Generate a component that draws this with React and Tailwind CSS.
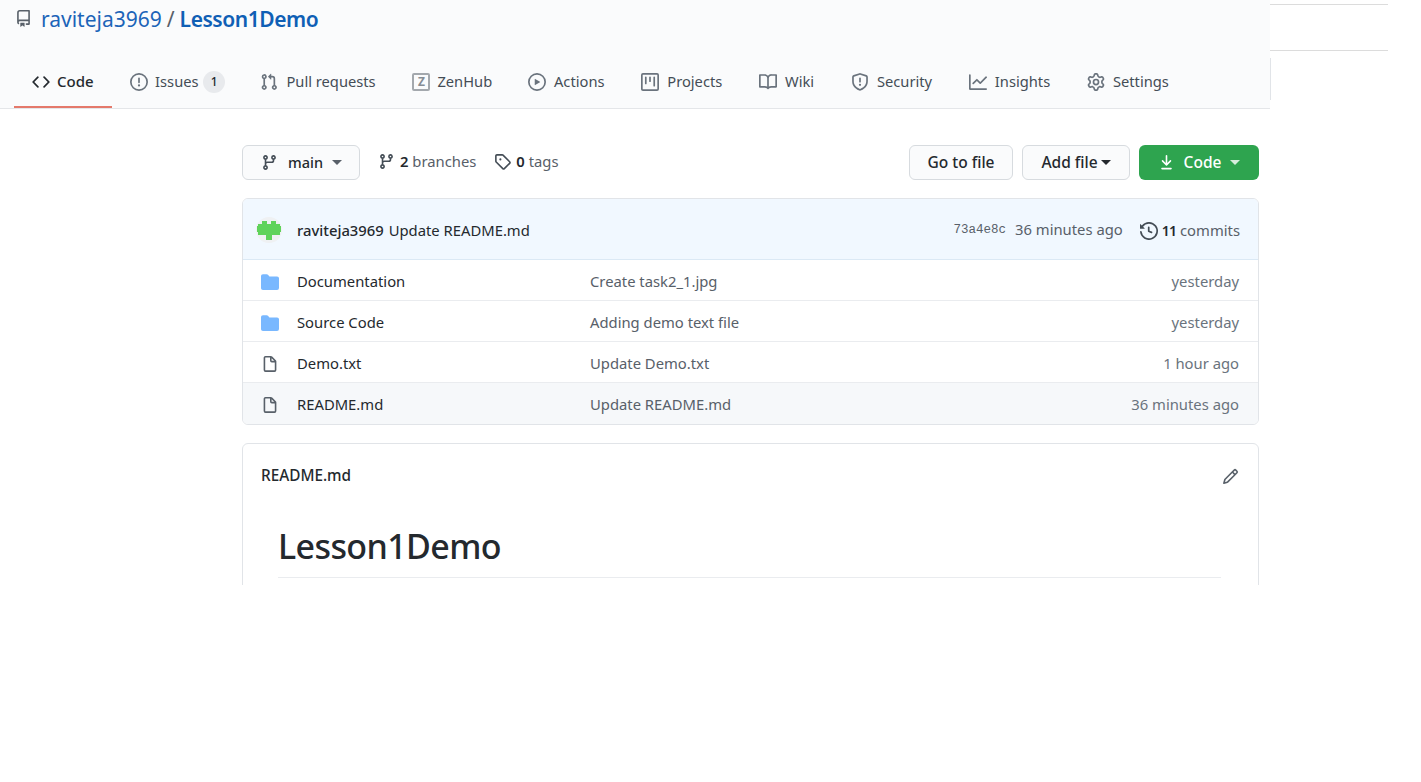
import React from "react";

const P = {
  repo: "M2 2.5A2.5 2.5 0 014.5 0h8.75a.75.75 0 01.75.75v12.5a.75.75 0 01-.75.75h-2.5a.75.75 0 110-1.5h1.75v-2h-8a1 1 0 00-.714 1.7.75.75 0 01-1.072 1.05A2.495 2.495 0 012 11.5v-9zm10.5-1V9h-8c-.356 0-.694.074-1 .208V2.5a1 1 0 011-1h8zM5 12.25v3.25a.25.25 0 00.4.2l1.45-1.087a.25.25 0 01.3 0L8.6 15.7a.25.25 0 00.4-.2v-3.25a.25.25 0 00-.25-.25h-3.5a.25.25 0 00-.25.25z",
  code: "M4.72 3.22a.75.75 0 011.06 1.06L2.06 8l3.72 3.72a.75.75 0 11-1.06 1.06L.47 8.53a.75.75 0 010-1.06l4.25-4.25zm6.56 0a.75.75 0 10-1.06 1.06L13.94 8l-3.72 3.72a.75.75 0 101.06 1.06l4.25-4.25a.75.75 0 000-1.06l-4.25-4.25z",
  issue: "M8 1.5a6.5 6.5 0 100 13 6.5 6.5 0 000-13zM0 8a8 8 0 1116 0A8 8 0 010 8zm9 3a1 1 0 11-2 0 1 1 0 012 0zm-.25-6.25a.75.75 0 00-1.5 0v3.5a.75.75 0 001.5 0v-3.5z",
  pr: "M7.177 3.073L9.573.677A.25.25 0 0110 .854v4.792a.25.25 0 01-.427.177L7.177 3.427a.25.25 0 010-.354zM3.75 2.5a.75.75 0 100 1.5.75.75 0 000-1.5zm-2.25.75a2.25 2.25 0 113 2.122v5.256a2.251 2.251 0 11-1.5 0V5.372A2.25 2.25 0 011.5 3.25zM11 2.5h-1V4h1a1 1 0 011 1v5.628a2.251 2.251 0 101.5 0V5A2.5 2.5 0 0011 2.5zm1 10.25a.75.75 0 111.5 0 .75.75 0 01-1.5 0zM3.75 12a.75.75 0 100 1.5.75.75 0 000-1.5z",
  play: "M1.5 8a6.5 6.5 0 1113 0 6.5 6.5 0 01-13 0zM8 0a8 8 0 100 16A8 8 0 008 0zM6.379 5.227A.25.25 0 006 5.442v5.117a.25.25 0 00.379.214l4.264-2.559a.25.25 0 000-.428L6.379 5.227z",
  project: "M1.75 0A1.75 1.75 0 000 1.75v12.5C0 15.216.784 16 1.75 16h12.5A1.75 1.75 0 0016 14.25V1.75A1.75 1.75 0 0014.25 0H1.75zM1.5 1.75a.25.25 0 01.25-.25h12.5a.25.25 0 01.25.25v12.5a.25.25 0 01-.25.25H1.75a.25.25 0 01-.25-.25V1.75zM11.75 3a.75.75 0 00-.75.75v7.5a.75.75 0 001.5 0v-7.5a.75.75 0 00-.75-.75zm-8.25.75a.75.75 0 011.5 0v5.5a.75.75 0 01-1.5 0v-5.5zM8 3a.75.75 0 00-.75.75v3.5a.75.75 0 001.5 0v-3.5A.75.75 0 008 3z",
  book: "M0 1.75A.75.75 0 01.75 1h4.253c1.227 0 2.317.59 3 1.501A3.744 3.744 0 0111.006 1h4.245a.75.75 0 01.75.75v10.5a.75.75 0 01-.75.75h-4.507a2.25 2.25 0 00-1.591.659l-.622.621a.75.75 0 01-1.06 0l-.622-.621A2.25 2.25 0 005.258 13H.75a.75.75 0 01-.75-.75V1.75zm8.755 3a2.25 2.25 0 012.25-2.25H14.5v9h-3.757c-.71 0-1.4.201-1.992.572l.004-7.322zm-1.504 7.324l.004-5.073-.002-2.253A2.25 2.25 0 005.003 2.5H1.5v9h3.757a3.75 3.75 0 011.994.574z",
  shield: "M7.467.133a1.75 1.75 0 011.066 0l5.25 1.68A1.75 1.75 0 0115 3.48V7c0 1.566-.32 3.182-1.303 4.682-.983 1.498-2.585 2.813-5.032 3.855a1.7 1.7 0 01-1.33 0c-2.447-1.042-4.049-2.357-5.032-3.855C1.32 10.182 1 8.566 1 7V3.48a1.75 1.75 0 011.217-1.667l5.25-1.68zm.61 1.429a.25.25 0 00-.153 0l-5.25 1.68a.25.25 0 00-.174.238V7c0 1.358.275 2.666 1.057 3.86.784 1.194 2.121 2.34 4.366 3.297a.2.2 0 00.154 0c2.245-.956 3.582-2.104 4.366-3.298C13.225 9.666 13.5 8.36 13.5 7V3.48a.25.25 0 00-.174-.237l-5.25-1.68zM9 10.5a1 1 0 11-2 0 1 1 0 012 0zm-.25-5.75a.75.75 0 10-1.5 0v3a.75.75 0 001.5 0v-3z",
  graph: "M1.5 1.75a.75.75 0 00-1.5 0v12.5c0 .414.336.75.75.75h14.5a.75.75 0 000-1.5H1.5V1.75zm14.28 2.53a.75.75 0 00-1.06-1.06L10 7.94 7.53 5.47a.75.75 0 00-1.06 0L3.22 8.72a.75.75 0 001.06 1.06L7 7.06l2.47 2.47a.75.75 0 001.06 0l5.25-5.25z",
  gear: "M7.429 1.525a6.593 6.593 0 011.142 0c.036.003.108.036.137.146l.289 1.105c.147.56.55.967.997 1.189.174.086.341.183.501.29.417.278.97.423 1.53.27l1.102-.303c.11-.03.175.016.195.046.219.31.41.641.573.989.014.031.022.11-.059.19l-.815.806c-.411.406-.562.957-.53 1.456a4.588 4.588 0 010 .582c-.032.499.119 1.05.53 1.456l.815.806c.08.08.073.159.059.19a6.494 6.494 0 01-.573.99c-.02.029-.086.074-.195.045l-1.103-.303c-.559-.153-1.112-.008-1.529.27-.16.107-.327.204-.5.29-.449.222-.851.628-.998 1.189l-.289 1.105c-.029.11-.101.143-.137.146a6.613 6.613 0 01-1.142 0c-.036-.003-.108-.037-.137-.146l-.289-1.105c-.147-.56-.55-.967-.997-1.189a4.502 4.502 0 01-.501-.29c-.417-.278-.97-.423-1.53-.27l-1.102.303c-.11.03-.175-.016-.195-.046a6.492 6.492 0 01-.573-.989c-.014-.031-.022-.11.059-.19l.815-.806c.411-.406.562-.957.53-1.456a4.587 4.587 0 010-.582c.032-.499-.119-1.05-.53-1.456l-.815-.806c-.08-.08-.073-.159-.059-.19a6.44 6.44 0 01.573-.99c.02-.029.086-.075.195-.045l1.103.303c.559.153 1.112.008 1.529-.27.16-.107.327-.204.5-.29.449-.222.851-.628.998-1.189l.289-1.105c.029-.11.101-.143.137-.146zM8 0c-.236 0-.47.01-.701.03-.743.065-1.29.615-1.458 1.261l-.29 1.106c-.017.066-.078.158-.211.224a5.994 5.994 0 00-.668.386c-.123.082-.233.09-.3.071L3.27 2.776c-.644-.177-1.392.02-1.82.63a7.977 7.977 0 00-.704 1.217c-.315.675-.111 1.422.363 1.891l.815.806c.05.048.098.147.088.294a6.084 6.084 0 000 .772c.01.147-.038.246-.088.294l-.815.806c-.474.469-.678 1.216-.363 1.891.2.428.436.835.704 1.218.428.609 1.176.806 1.82.63l1.103-.303c.066-.019.176-.011.299.071.213.143.436.272.668.386.133.066.194.158.212.224l.289 1.106c.169.646.715 1.196 1.458 1.26a8.094 8.094 0 001.402 0c.743-.064 1.29-.614 1.458-1.26l.29-1.106c.017-.066.078-.158.211-.224a5.98 5.98 0 00.668-.386c.123-.082.233-.09.3-.071l1.102.302c.644.177 1.392-.02 1.82-.63.268-.382.505-.789.704-1.217.315-.675.111-1.422-.364-1.891l-.814-.806c-.05-.048-.098-.147-.088-.294a6.1 6.1 0 000-.772c-.01-.147.039-.246.088-.294l.814-.806c.475-.469.679-1.216.364-1.891a7.992 7.992 0 00-.704-1.218c-.428-.609-1.176-.806-1.82-.63l-1.103.303c-.066.019-.176.011-.299-.071a5.991 5.991 0 00-.668-.386c-.133-.066-.194-.158-.212-.224L10.16 1.29C9.99.645 9.444.095 8.701.031A8.094 8.094 0 008 0zm1.5 8a1.5 1.5 0 11-3 0 1.5 1.5 0 013 0zM11 8a3 3 0 11-6 0 3 3 0 016 0z",
  branch: "M11.75 2.5a.75.75 0 100 1.5.75.75 0 000-1.5zm-2.25.75a2.25 2.25 0 113 2.122V6A2.5 2.5 0 0110 8.5H6a1 1 0 00-1 1v1.128a2.251 2.251 0 11-1.5 0V5.372a2.25 2.25 0 111.5 0v1.836A2.492 2.492 0 016 7h4a1 1 0 001-1v-.628A2.25 2.25 0 019.5 3.25zM4.25 12a.75.75 0 100 1.5.75.75 0 000-1.5zM3.5 3.25a.75.75 0 111.5 0 .75.75 0 01-1.5 0z",
  tag: "M2.5 7.775V2.75a.25.25 0 01.25-.25h5.025a.25.25 0 01.177.073l6.25 6.25a.25.25 0 010 .354l-5.025 5.025a.25.25 0 01-.354 0l-6.25-6.25a.25.25 0 01-.073-.177zm-1.5 0V2.75C1 1.784 1.784 1 2.75 1h5.025c.464 0 .91.184 1.238.513l6.25 6.25a1.75 1.75 0 010 2.474l-5.026 5.026a1.75 1.75 0 01-2.474 0l-6.25-6.25A1.75 1.75 0 011 7.775zM6 5a1 1 0 100 2 1 1 0 000-2z",
  download: "M7.47 10.78a.75.75 0 001.06 0l3.75-3.75a.75.75 0 00-1.06-1.06L8.75 8.44V1.75a.75.75 0 00-1.5 0v6.69L4.78 5.97a.75.75 0 00-1.06 1.06l3.75 3.75zM3.75 13a.75.75 0 000 1.5h8.5a.75.75 0 000-1.5h-8.5z",
  history: "M1.643 3.143L.427 1.927A.25.25 0 000 2.104V5.75c0 .138.112.25.25.25h3.646a.25.25 0 00.177-.427L2.715 4.215a6.5 6.5 0 11-1.18 4.458.75.75 0 10-1.493.154 8.001 8.001 0 101.6-5.684zM7.75 4a.75.75 0 01.75.75v2.992l2.028.812a.75.75 0 01-.557 1.392l-2.5-1A.75.75 0 017 8.25v-3.5A.75.75 0 017.75 4z",
  folder: "M1.75 1A1.75 1.75 0 000 2.75v10.5C0 14.216.784 15 1.75 15h12.5A1.75 1.75 0 0016 13.25v-8.5A1.75 1.75 0 0014.25 3H7.5a.25.25 0 01-.2-.1l-.9-1.2C6.07 1.26 5.55 1 5 1H1.75z",
  file: "M3.75 1.5a.25.25 0 00-.25.25v11.5c0 .138.112.25.25.25h8.5a.25.25 0 00.25-.25V6H9.75A1.75 1.75 0 018 4.25V1.5H3.75zm5.75.56v2.19c0 .138.112.25.25.25h2.19L9.5 2.06zM2 1.75C2 .784 2.784 0 3.75 0h5.086c.464 0 .909.184 1.237.513l3.414 3.414c.329.328.513.773.513 1.237v8.086A1.75 1.75 0 0112.25 15h-8.5A1.75 1.75 0 012 13.25V1.75z",
  pencil: "M11.013 1.427a1.75 1.75 0 012.474 0l1.086 1.086a1.75 1.75 0 010 2.474l-8.61 8.61c-.21.21-.47.364-.756.445l-3.251.93a.75.75 0 01-.927-.928l.929-3.25a1.75 1.75 0 01.445-.758l8.61-8.61zm1.414 1.06a.25.25 0 00-.354 0L10.811 3.75l1.439 1.44 1.263-1.263a.25.25 0 000-.354l-1.086-1.086zM11.189 6.25L9.75 4.81l-6.286 6.287a.25.25 0 00-.064.108l-.558 1.953 1.953-.558a.249.249 0 00.108-.064l6.286-6.286z",
};

function Icon({ name, size = 17, className = "" }) {
  return (
    <svg viewBox="0 0 16 16" width={size} height={size} fill="currentColor" className={"shrink-0 " + className}>
      <path fillRule="evenodd" clipRule="evenodd" d={P[name]} />
    </svg>
  );
}

function Caret({ className = "" }) {
  return <span className={"inline-block w-0 h-0 border-x-[5px] border-x-transparent border-t-[5px] " + className} />;
}

function Tab({ icon, label, active, badge }) {
  const look = active
    ? "gap-[7px] px-[18px] text-[15px] border-[#e4796b] text-[#24292e] font-medium"
    : badge
      ? "gap-[7.5px] pl-[18px] pr-[17px] text-[14.7px] border-transparent text-[#444d56]"
      : icon === "zenhub"
        ? "gap-[7px] pl-[18.4px] pr-[17.4px] text-[14.7px] border-transparent text-[#444d56]"
        : "gap-[8px] px-[18.4px] text-[14.7px] border-transparent text-[#444d56]";
  return (
    <div className={"h-full flex items-center border-b-2 " + look}>
      {icon === "zenhub" ? (
        <span className="w-[18px] h-[18px] border-2 border-[#a3a8ad] rounded-[2px] flex items-center justify-center text-[12px] font-bold leading-none text-[#868d94]">Z</span>
      ) : (
        <Icon name={icon} size={18} className={active ? "text-[#24292e]" : "text-[#6a737d]"} />
      )}
      <span>{label}</span>
      {badge && <span className="ml-[-3px] w-[22px] h-[22px] rounded-full bg-[#e8eaed] flex items-center justify-center text-[12px] font-medium text-[#24292e]">{badge}</span>}
    </div>
  );
}

function Row({ icon, name, msg, time, last }) {
  const folder = icon === "folder";
  return (
    <div className={"h-[41px] pt-[2px] flex items-center pl-[18px] pr-[19px] text-[14.8px] " + (last ? "bg-[#f6f8fa]" : "border-b border-[#eaecef]")}>
      <Icon name={icon} size={folder ? 18 : 17} className={"w-[18px] mt-[2px] " + (folder ? "text-[#79b8ff]" : "text-[#586069]")} />
      <span className="ml-[18px] w-[293px] text-[#24292e]">{name}</span>
      <span className="flex-1 text-[#586069]">{msg}</span>
      <span className="text-[#6a737d]">{time}</span>
    </div>
  );
}

function Avatar() {
  return (
    <span className="w-[26px] h-[26px] rounded-full bg-[#eff1f3] flex items-center justify-center shrink-0">
      <svg width="24" height="19" viewBox="0 0 24 19" fill="#5fd35b">
        <path d="M5 0h5v3h4V0h5v3h4v2h1v6h-1v3h-8v5H9v-5H1v-3H0V5h1V3h4z" />
      </svg>
    </span>
  );
}

export default function App() {
  return (
    <div className="min-h-[782px] bg-white overflow-hidden" style={{ fontFamily: '"Noto Sans", "Open Sans", Arial, sans-serif' }}>
      <div className="flex items-start">
        <header className="w-[1270px] h-[109px] bg-[#fafbfc] border-b border-[#e4e6e9] flex flex-col">
          <div className="h-[57px] flex items-start pl-[15px] pt-[4px] text-[21px] leading-[30px]">
            <Icon name="repo" size={17} className="text-[#586069] mt-[6px] mr-[9px]" />
            <span className="text-[#1c64b8]">raviteja3969</span>
            <span className="text-[#586069] mx-[5px]">/</span>
            <span className="text-[#0f5fb5] font-semibold tracking-[-0.45px]">Lesson1Demo</span>
          </div>
          <nav className="h-[51px] flex pl-[14px]">
            <Tab icon="code" label="Code" active />
            <Tab icon="issue" label="Issues" badge="1" />
            <Tab icon="pr" label="Pull requests" />
            <Tab icon="zenhub" label="ZenHub" />
            <Tab icon="play" label="Actions" />
            <Tab icon="project" label="Projects" />
            <Tab icon="book" label="Wiki" />
            <Tab icon="shield" label="Security" />
            <Tab icon="graph" label="Insights" />
            <Tab icon="gear" label="Settings" />
          </nav>
        </header>
        <div className="flex flex-col">
          <div className="w-[118px] h-[47px] mt-[4px] border-y border-[#dcdcdc]" />
          <div className="h-[42px] mt-[7px] border-l border-[#e1e4e8]" />
        </div>
      </div>

      <main className="ml-[242px] w-[1017px] h-[476px] overflow-hidden">
        <div className="mt-[36px] h-[35px] flex items-center text-[14.8px]">
          <div className="w-[118px] h-[35px] rounded-[6px] border border-[#d7dbdf] bg-[#fafbfc] flex items-center justify-center gap-[9px] pl-[1px] font-medium text-[14.5px] text-[#24292e]">
            <Icon name="branch" className="text-[#444d56] mr-[1px]" />
            <span>main</span>
            <Caret className="border-t-[#586069]" />
          </div>
          <div className="ml-[18px] -mt-[2px] flex items-center gap-[5px] text-[#586069]">
            <Icon name="branch" className="text-[#444d56]" />
            <span><b className="font-semibold text-[#24292e]">2</b> branches</span>
          </div>
          <div className="ml-[18px] -mt-[2px] flex items-center gap-[5px] text-[#586069]">
            <Icon name="tag" className="text-[#444d56]" />
            <span><b className="font-semibold text-[#24292e]">0</b> tags</span>
          </div>
          <div className="ml-auto flex items-center gap-[9px] font-medium text-[15.5px] text-[#24292e]">
            <div className="w-[104px] h-[35px] rounded-[6px] border border-[#d7dbdf] bg-[#fafbfc] flex items-center justify-center">Go to file</div>
            <div className="w-[108px] h-[35px] rounded-[6px] border border-[#d7dbdf] bg-[#fafbfc] flex items-center justify-center gap-[3px]">
              <span>Add file</span>
              <Caret className="border-t-[#24292e]" />
            </div>
            <div className="w-[120px] h-[35px] rounded-[6px] bg-[#2ea44f] text-white flex items-center justify-center gap-[9px]">
              <Icon name="download" />
              <span>Code</span>
              <Caret className="border-t-white/80" />
            </div>
          </div>
        </div>

        <section className="mt-[18px] rounded-[6px] border border-[#e1e4e8] overflow-hidden">
          <div className="h-[61px] pt-[2px] bg-[#f1f8ff] border-b border-[#dbe9f5] flex items-center pl-[13px] pr-[18px] text-[14.8px]">
            <Avatar />
            <span className="ml-[15px] font-medium text-[#24292e]">raviteja3969</span>
            <span className="ml-[5px] text-[#24292e]">Update README.md</span>
            <span className="ml-auto text-[12.5px] text-[#586069]" style={{ fontFamily: '"Liberation Mono", monospace' }}>73a4e8c</span>
            <span className="ml-[9px] -mt-[2px] text-[#586069]">36 minutes ago</span>
            <Icon name="history" size={18} className="ml-[17px] mt-[1px] text-[#444d56]" />
            <span className="ml-[4px] text-[#586069]"><b className="font-semibold text-[14px] text-[#24292e] tracking-[-0.8px]">11</b> commits</span>
          </div>
          <Row icon="folder" name="Documentation" msg="Create task2_1.jpg" time="yesterday" />
          <Row icon="folder" name="Source Code" msg="Adding demo text file" time="yesterday" />
          <Row icon="file" name="Demo.txt" msg="Update Demo.txt" time="1 hour ago" />
          <Row icon="file" name="README.md" msg="Update README.md" time="36 minutes ago" last />
        </section>

        <section className="mt-[18px] rounded-t-[6px] border border-[#e1e4e8] h-[300px]">
          <div className="h-[64px] flex items-center justify-between pl-[18px] pr-[19px]">
            <span className="text-[15.3px] font-medium text-[#24292e] -mt-[2px]">README.md</span>
            <Icon name="pencil" className="text-[#586069]" />
          </div>
          <div className="ml-[35px] mr-[37px] mt-[13px] pb-[6px] border-b border-[#eaecef]">
            <h1 className="text-[34px] tracking-[-0.6px] leading-[50px] font-medium text-[#24292e]">Lesson1Demo</h1>
          </div>
        </section>
      </main>
    </div>
  );
}
